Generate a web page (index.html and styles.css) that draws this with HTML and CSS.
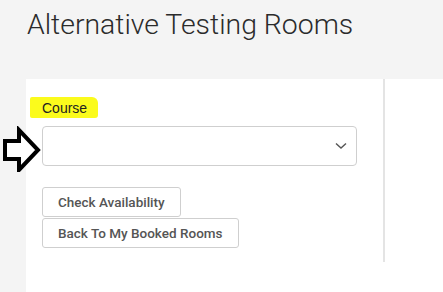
FILE: index.html
```html
<!DOCTYPE html>
<html>
<head>
  <title>Alternative Testing Rooms</title>
<link rel="stylesheet" href="styles.css">
</head>
<body>
  <h1 class="page-title">Alternative Testing Rooms</h1>

  <div class="rooms-panel">
    <div class="rooms-form">
      <label class="rooms-form_label" for="course"><span class="rooms-form_mark">Course</span></label>
      <div class="rooms-form_select">
        <select id="course"></select>
        <svg class="rooms-form_chevron" width="12" height="8" viewBox="0 0 12 8">
          <path d="M1 1.5 L6 6 L11 1.5" fill="none" stroke="#555" stroke-width="1.4"/>
        </svg>
      </div>
      <div class="rooms-form_actions">
        <button class="rooms-btn" type="button">Check Availability</button>
        <button class="rooms-btn" type="button">Back To My Booked Rooms</button>
      </div>
    </div>
    <div class="rooms-results"></div>
  </div>

  <!-- стрелка-пометка на скриншоте -->
  <svg class="note-arrow" width="42" height="46" viewBox="0 0 42 46">
    <path d="M4 15 H18 V4 L37 24 L18 44 V33 H4 Z" fill="#fff" stroke="#000" stroke-width="4" stroke-linejoin="miter"/>
  </svg>
</body>
</html>
```

FILE: styles.css
```css
body {
    margin: 0;
    background: #f4f4f4;
    font-family: Roboto, "Liberation Sans", sans-serif;
    min-height: 292px;
}

.page-title {
    margin: 0;
    padding: 9px 0 0 27px;
    font-size: 28.4px;
    line-height: 32px;
    font-weight: 300;
    color: #2b2b2b;
}

.rooms-panel {
    display: flex;
    margin: 38px 0 0 26px;
    background: #fff;
    min-height: 213px;
    align-items: flex-start;
}

.rooms-form {
    width: 341px;
    height: 165px;
    padding: 18px 0 0 16px;
    border-right: 2px solid #e4e4e4;
}

.rooms-form_label {
    display: block;
    height: 21px;
}

.rooms-form_mark {
    display: inline-block;
    margin-left: -12px;
    padding: 0 11px 0 12px;
    height: 21px;
    line-height: 22px;
    background: #fbfb1c;
    border-radius: 2px 6px 3px 2px;
    font-family: "Liberation Sans", Arial, sans-serif;
    font-size: 14px;
    color: #222;
}

.rooms-form_select {
    position: relative;
    margin-top: 8px;
    width: 315px;
}

.rooms-form_select select {
    display: block;
    width: 315px;
    height: 40px;
    border: 1px solid #cfcfcf;
    border-radius: 4px;
    background: #fff;
    appearance: none;
}

.rooms-form_chevron {
    position: absolute;
    right: 10px;
    top: 16px;
}

.rooms-form_actions {
    display: flex;
    flex-direction: column;
    align-items: flex-start;
    gap: 1px;
    margin-top: 21px;
}

.rooms-btn {
    height: 30px;
    padding: 0 15px;
    background: #fff;
    border: 1px solid #cfcfcf;
    border-radius: 3px;
    font-family: Roboto, sans-serif;
    font-size: 13.5px;
    font-weight: 500;
    color: #555;
}

.rooms-results {
    flex: 1;
}

.note-arrow {
    position: absolute;
    left: 1px;
    top: 126px;
}
```
